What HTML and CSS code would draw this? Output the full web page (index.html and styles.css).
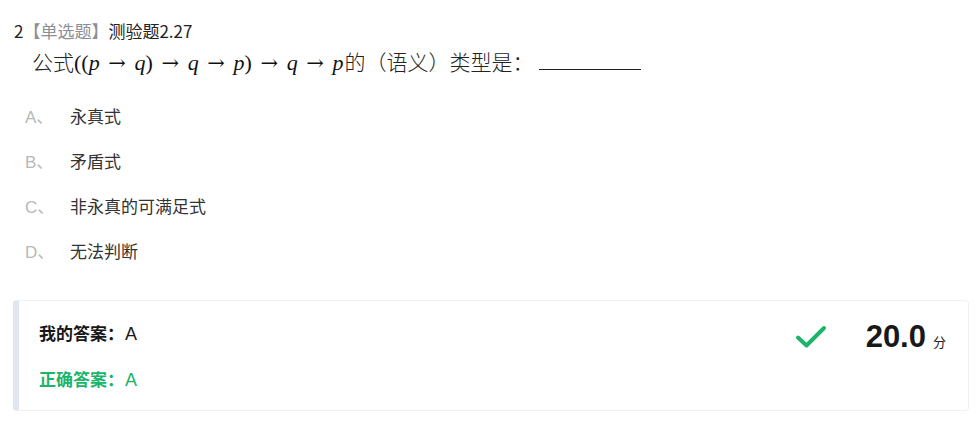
FILE: index.html
```html
<!DOCTYPE html>
<html lang="zh-CN">
<head>
<meta charset="utf-8">
<title>测验题2.27</title>
<link rel="stylesheet" href="styles.css">
</head>
<body>
<div class="question">
  <div class="q-title"><span class="q-num">2</span><span class="q-type">【单选题】</span><span class="q-name">测验题2.27</span></div>
  <div class="q-formula"><span class="cjk">公式</span><span class="math">((<i>p</i><span class="op">→</span><i>q</i>)<span class="op">→</span><i>q</i><span class="op">→</span><i>p</i>)<span class="op">→</span><i>q</i><span class="op">→</span><i>p</i></span><span class="cjk">的（语义）类型是：</span><span class="blank"></span></div>
  <ul class="options">
    <li class="option"><span class="opt-label">A、</span><span class="opt-text">永真式</span></li>
    <li class="option"><span class="opt-label">B、</span><span class="opt-text">矛盾式</span></li>
    <li class="option"><span class="opt-label">C、</span><span class="opt-text">非永真的可满足式</span></li>
    <li class="option"><span class="opt-label">D、</span><span class="opt-text">无法判断</span></li>
  </ul>
  <div class="answer-card">
    <div class="answers">
      <div class="ans-row mine"><b>我的答案：</b><span>A</span></div>
      <div class="ans-row right"><b>正确答案：</b><span>A</span></div>
    </div>
    <div class="score">
      <svg class="check" width="32" height="24" viewBox="0 0 32 24"><path d="M3 12.5 L11.5 20.5 L29 3" fill="none" stroke="#1ab46a" stroke-width="4" stroke-linecap="round" stroke-linejoin="round"/></svg>
      <span class="points">20.0</span><span class="unit">分</span>
    </div>
  </div>
</div>
</body>
</html>
```
FILE: styles.css
```css
html, body {
  margin: 0;
  padding: 0;
  background: #fff;
}
body {
  font-family: "Noto Sans CJK SC", "Liberation Sans", sans-serif;
  color: #333;
}
.question {
  padding: 20px 8px 0 13px;
}
.q-title {
  font-size: 17px;
  line-height: 22px;
  color: #222;
  padding-left: 1px;
}
.q-type {
  color: #8d8f96;
}
.q-formula {
  margin-top: 5px;
  padding-left: 19px;
  font-size: 22px;
  line-height: 28px;
  color: #111;
  display: flex;
  align-items: baseline;
  font-family: "Liberation Serif", "DejaVu Serif", serif;
}
.q-formula .cjk {
  font-family: "Noto Sans CJK SC", sans-serif;
  font-size: 21px;
  font-weight: 300;
  color: #222;
}
.q-formula .math {
  white-space: pre;
  padding-right: 1px;
}
.q-formula i {
  font-style: italic;
}
.q-formula .op {
  display: inline-block;
  width: 1em;
  margin: 0 0.33em;
  text-align: center;
  font-family: "DejaVu Serif", serif;
  font-size: 21px;
}
.blank {
  display: inline-block;
  width: 102px;
  border-bottom: 1px solid #222;
  height: 1px;
  margin-left: 5px;
}
.options {
  list-style: none;
  margin: 16px 0 0;
  padding: 0;
}
.option {
  display: flex;
  align-items: center;
  height: 45px;
  font-size: 17px;
}
.opt-label {
  width: 45px;
  padding-left: 12px;
  color: #b8b8b8;
  font-family: "Liberation Sans", "Noto Sans CJK SC", sans-serif;
}
.opt-text {
  color: #333;
}
.answer-card {
  margin-top: 27px;
  width: 949px;
  height: 109px;
  border: 1px solid #eef0f3;
  border-left: 6px solid #dfe6f0;
  border-radius: 4px;
  display: flex;
  justify-content: space-between;
  align-items: flex-start;
  box-sizing: content-box;
}
.answers {
  padding: 20px 0 0 20px;
  display: flex;
  flex-direction: column;
  gap: 21px;
}
.ans-row {
  font-size: 17px;
  line-height: 24px;
  display: flex;
  align-items: baseline;
}
.ans-row b {
  font-weight: 700;
}
.ans-row span {
  font-family: "Liberation Sans", sans-serif;
  font-size: 18px;
  margin-left: 1px;
}
.mine {
  color: #181818;
}
.right {
  color: #1ab46a;
}
.score {
  display: flex;
  align-items: baseline;
  padding: 18px 22px 0 0;
}
.check {
  align-self: center;
  margin-right: 39px;
}
.points {
  font-family: "Liberation Sans", sans-serif;
  font-size: 31px;
  font-weight: 700;
  color: #181818;
}
.unit {
  margin-left: 7px;
  font-size: 13px;
  color: #222;
}
```
